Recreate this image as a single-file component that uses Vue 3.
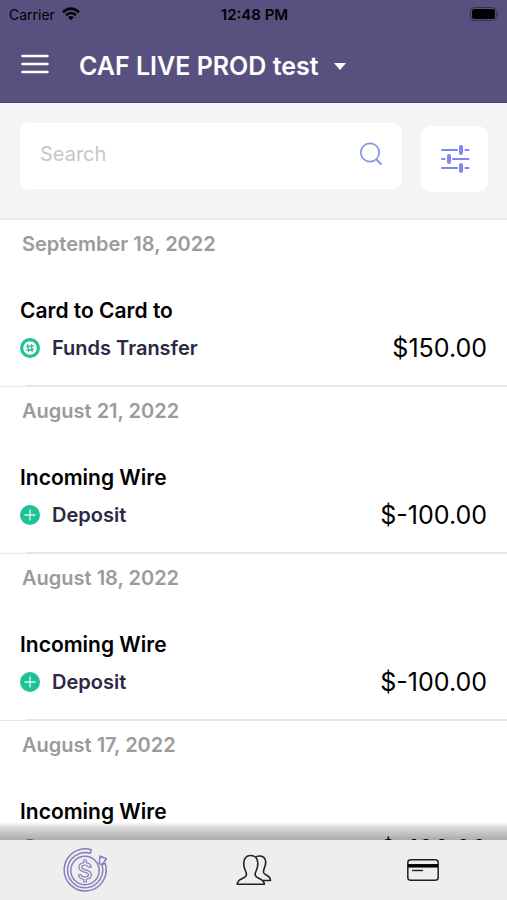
<script setup>
import { ref } from 'vue'

const query = ref('')
const entries = [
  { date: 'September 18, 2022', title: 'Card to Card to', kind: 'Funds Transfer', amount: '$150.00', icon: 'transfer' },
  { date: 'August 21, 2022', title: 'Incoming Wire', kind: 'Deposit', amount: '$-100.00', icon: 'plus' },
  { date: 'August 18, 2022', title: 'Incoming Wire', kind: 'Deposit', amount: '$-100.00', icon: 'plus' },
  { date: 'August 17, 2022', title: 'Incoming Wire', kind: 'Deposit', amount: '$-100.00', icon: 'plus' }
]
</script>

<template>
  <div class="screen">
    <header class="header">
      <div class="status">
        <div class="carrier">
          <span>Carrier</span>
          <svg class="wifi" viewBox="0 0 18 14" aria-hidden="true">
            <path d="M1 5.2Q9-2 17 5.2" fill="none" stroke="#000" stroke-width="2.5" />
            <path d="M3.9 8.2Q9 3.8 14.1 8.2" fill="none" stroke="#000" stroke-width="2.3" />
            <path d="M6.1 10.3Q9 7.8 11.9 10.3L9 13.3z" fill="#000" />
          </svg>
        </div>
        <span class="clock">12:48 PM</span>
        <svg class="battery" viewBox="0 0 30 14" aria-hidden="true">
          <rect x="0.5" y="0.5" width="26" height="13" rx="4" fill="none" stroke="#35304f" />
          <rect x="2" y="2" width="23" height="10" rx="2.5" fill="#000" />
          <path d="M28 5q2 2 0 4z" fill="#35304f" />
        </svg>
      </div>
      <div class="titlebar">
        <button class="plain" type="button" aria-label="Menu">
          <svg class="menu" viewBox="0 0 28 20" aria-hidden="true">
            <path d="M1.5 2h25M1.5 10h25M1.5 18h25" stroke="#fff" stroke-width="2.4" stroke-linecap="round" />
          </svg>
        </button>
        <button class="plain account" type="button">
          <span>CAF LIVE PROD test</span>
          <svg class="caret" viewBox="0 0 12 7" aria-hidden="true"><path d="M0 0h12L6 7z" fill="#fff" /></svg>
        </button>
      </div>
    </header>

    <form class="search" @submit.prevent>
      <div class="field">
        <input v-model="query" type="text" placeholder="Search" aria-label="Search" />
        <button class="plain" type="submit" aria-label="Find">
          <svg class="lens" viewBox="0 0 24 24" fill="none" stroke="#8791e8" aria-hidden="true">
            <circle cx="11" cy="10.500" r="9.200" stroke-width="1.7" />
            <path d="M17 17l5.500 5.500" stroke-width="2" />
          </svg>
        </button>
      </div>
      <button class="plain filter" type="button" aria-label="Filters">
        <svg class="sliders" viewBox="0 0 30 30" fill="none" stroke="#7c87f0" stroke-linecap="round" aria-hidden="true">
          <path d="M2 6h15M25.5 6h3M2 15h2.500M13 15h15.500M2 24h15M25.500 24h3" stroke-width="2" />
          <path d="M21 3v6M9 12v6M21 21v6" stroke-width="4" />
        </svg>
      </button>
    </form>

    <main class="list">
      <section v-for="entry in entries" :key="entry.date" class="entry">
        <p class="date">{{ entry.date }}</p>
        <h2 class="name">{{ entry.title }}</h2>
        <div class="detail">
          <svg class="mark" viewBox="0 0 20 20" fill="none" aria-hidden="true">
            <template v-if="entry.icon === 'plus'">
              <circle cx="10" cy="10" r="10" fill="#1fc296" />
              <path d="M10 4.500v11M4.500 10h11" stroke="#d5fff2" stroke-width="1.300" />
            </template>
            <template v-else>
              <circle cx="10" cy="10" r="8.400" stroke="#1fc296" stroke-width="3.200" />
              <path d="M7.800 6.800l.9 6.400M11.300 6.800l.9 6.400M6.800 8.700l6.400-.9M6.800 12.200l6.400-.9" stroke="#3dbd99" stroke-width="1.500" stroke-linecap="round" />
            </template>
          </svg>
          <span class="kind">{{ entry.kind }}</span>
          <span class="amount">{{ entry.amount }}</span>
        </div>
      </section>
    </main>

    <nav class="tabs">
      <a href="#activity" aria-label="Activity">
        <svg class="coin" viewBox="0 0 44 44" fill="none" stroke="#8581be" stroke-width="1.500" stroke-linejoin="round" aria-hidden="true">
          <path d="M28.300 1.800A21 21 0 1 0 42.200 15.500L38.900 16.700A17.600 17.600 0 1 1 27.300 5.300z" />
          <path d="M37 8l6.500 3-4.600 5.700-2.700-1.200z" />
          <circle cx="22" cy="22.500" r="14.200" />
          <path d="M20.700 12h2.600v2.700c2.700.5 4.600 2 5 4.500h-2.900c-.5-1.500-1.700-2.200-3.400-2.200-2 0-3.200.8-3.200 2.200 0 1.500 1.500 2 4 2.600 3.300.8 5.600 2 5.600 5 0 2.700-2 4.100-5.100 4.500V34h-2.600v-2.700c-3.100-.4-5-2-5.300-4.500h2.900c.4 1.400 1.700 2.200 3.800 2.200 2.100 0 3.400-.8 3.400-2.300 0-1.600-1.600-2-4.200-2.600-3.100-.7-5.300-1.900-5.300-4.800 0-2.400 1.700-4.100 4.700-4.600z" stroke-width="1.200" />
        </svg>
      </a>
      <a href="#contacts" aria-label="Contacts">
        <svg class="people" viewBox="0 0 36 32" fill="#eee" stroke="#222" stroke-width="1.600" stroke-linejoin="round" aria-hidden="true">
          <path d="M19.500 3.500C21 1.600 27 1 29 5c1 2 .5 6-.5 8.500-.8 2-1.500 3.500-.7 5.500 1 2.200 6.700 2.500 6.700 7.500H27" />
          <path d="M1.200 30.300c0-6 7.800-5.300 9-8.800.7-2-.3-3.700-1-5.300C7.900 13 7.500 8 8.600 5.300 9.800 2.500 12 1.500 14.800 1.500s5 1 6.200 3.800c1.100 2.700.7 7.700-.6 10.900-.7 1.600-1.700 3.300-1 5.300 1.200 3.500 9 2.800 9 8.800z" />
        </svg>
      </a>
      <a href="#cards" aria-label="Cards">
        <svg class="card" viewBox="0 0 32 22" fill="none" stroke="#222" aria-hidden="true">
          <rect x="0.800" y="0.800" width="30.400" height="20.400" rx="3" stroke-width="1.500" />
          <path d="M1 6.800h30" stroke="#000" stroke-width="3.500" />
          <path d="M5 11.500h11" stroke-width="1.400" />
        </svg>
      </a>
    </nav>
  </div>
</template>

<style>
body {
  margin: 0;
}
</style>

<style scoped>
.screen {
  display: flex;
  flex-direction: column;
  height: 100vh;
  overflow: hidden;
  background: #fff;
  color: #000;
  font-family: Inter, "Liberation Sans", sans-serif;
}
svg {
  display: block;
  flex: none;
}
.plain {
  padding: 0;
  border: 0;
  background: none;
  color: inherit;
  font: inherit;
}
.header {
  flex: none;
  background: #58517f;
  border-bottom: 1px solid #4b4473;
}
.status {
  display: grid;
  grid-template-columns: 1fr auto 1fr;
  align-items: center;
  height: 28px;
  padding: 0 7px 0 9px;
  font-size: 14px;
}
.carrier {
  display: flex;
  align-items: center;
  gap: 7px;
}
.wifi {
  width: 18px;
  height: 14px;
}
.clock {
  font-size: 15px;
  font-weight: 600;
}
.battery {
  justify-self: end;
  width: 30px;
  height: 14px;
}
.titlebar {
  display: flex;
  align-items: center;
  gap: 30px;
  height: 74px;
  padding: 2px 21px 0;
  box-sizing: border-box;
}
.menu {
  width: 28px;
  height: 20px;
  margin-bottom: 4px;
}
.account {
  display: flex;
  align-items: center;
  gap: 15px;
  color: #fff;
  font-size: 25px;
  font-weight: 600;
}
.caret {
  width: 12px;
  height: 7px;
}
.search {
  display: flex;
  flex: none;
  gap: 19px;
  padding: 20px 19px 26px 20px;
  background: #f4f4f7;
  border-bottom: 2px solid #ebebec;
}
.field {
  display: flex;
  flex: 1;
  align-items: center;
  box-sizing: border-box;
  min-width: 0;
  height: 66px;
  margin-bottom: 3px;
  padding: 0 19px 4px 20px;
  border-radius: 8px;
  background: #fff;
}
.field input {
  flex: 1;
  min-width: 0;
  padding: 0;
  border: 0;
  outline: 0;
  background: none;
  font: 20px Inter, "Liberation Sans", sans-serif;
}
.field input::placeholder {
  color: #c6c6c8;
  opacity: 1;
}
.lens {
  width: 24px;
  height: 24px;
}
.filter {
  display: flex;
  align-items: center;
  justify-content: center;
  align-self: flex-end;
  width: 67px;
  height: 66px;
  border-radius: 10px;
  background: #fff;
}
.sliders {
  width: 30px;
  height: 30px;
}
.list {
  flex: 1;
  min-height: 0;
  overflow: hidden;
}
.entry {
  display: flex;
  flex-direction: column;
  box-sizing: border-box;
  height: 167px;
  padding: 12px 0 0;
  border-bottom: 1px solid #e9e9e9;
}
.entry::after {
  height: 1px;
  margin: auto 0 0 26px;
  background: #e5e5e5;
  content: "";
}
.date {
  margin: 0 22px 43px;
  color: #9b9b9b;
  font-size: 20px;
  font-weight: 600;
  line-height: 24px;
}
.name {
  margin: 0 20px 9px;
  font-size: 21px;
  font-weight: 600;
  line-height: 24px;
}
.detail {
  display: flex;
  align-items: center;
  height: 32px;
  padding: 0 20px;
}
.mark {
  width: 20px;
  height: 20px;
  margin-right: 12px;
}
.kind {
  flex: 1;
  color: #2d2844;
  font-size: 20px;
  font-weight: 600;
}
.amount {
  font-size: 25px;
}
.tabs {
  position: relative;
  display: grid;
  flex: none;
  grid-template-columns: repeat(3, 1fr);
  height: 60px;
  background: #eee;
}
.tabs::before {
  position: absolute;
  right: 0;
  bottom: 100%;
  left: 0;
  height: 18px;
  background: linear-gradient(rgba(0, 0, 0, 0), rgba(0, 0, 0, 0.16) 35%, rgba(0, 0, 0, 0.33));
  content: "";
}
.tabs a {
  display: flex;
  align-items: center;
  justify-content: center;
}
.coin {
  width: 44px;
  height: 44px;
}
.people {
  width: 36px;
  height: 32px;
}
.card {
  width: 32px;
  height: 22px;
}
</style>
